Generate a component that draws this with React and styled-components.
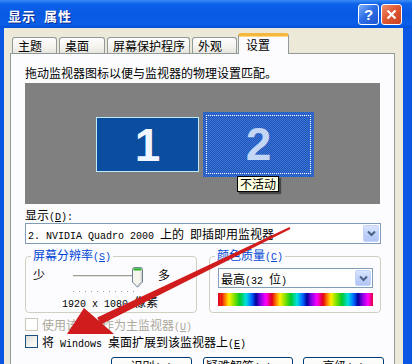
import React from "react";
import styled, { createGlobalStyle } from "styled-components";

const GlobalStyle = createGlobalStyle`
  * { box-sizing: border-box; }
  html, body { margin: 0; padding: 0; background: #0b57e4; }
  body {
    font-family: "Noto Sans CJK SC", "Noto Sans", sans-serif;
    font-size: 12px;
    color: #000;
  }
  #root { width: 412px; height: 364px; }
`;

const Window = styled.div`
  position: relative;
  width: 412px;
  height: 364px;
  overflow: hidden;
  display: flex;
  flex-direction: column;
  background: #0b57e4;
`;

const TitleBar = styled.div`
  flex: none;
  height: 28px;
  display: flex;
  align-items: center;
  justify-content: space-between;
  padding: 2px 10px 0 8px;
  background: linear-gradient(
    180deg,
    #3c8cf6 0%,
    #0d62ea 14%,
    #0858e2 50%,
    #0a5ee8 86%,
    #0550d8 100%
  );
`;

const Title = styled.div`
  color: #fff;
  font-weight: bold;
  font-size: 13px;
  letter-spacing: 1px;
  word-spacing: 4px;
  text-shadow: 1px 1px 0 #0c2a8a;
`;

const TitleButtons = styled.div`
  display: flex;
  gap: 2px;
  margin-top: -1px;
`;

const CapBtn = styled.div`
  width: 21px;
  height: 21px;
  border: 1px solid #fff;
  border-radius: 3px;
  display: flex;
  align-items: center;
  justify-content: center;
  color: #fff;
  font: bold 15px "Liberation Sans", Arial, sans-serif;
  background: ${(p) =>
    p.$close
      ? "linear-gradient(135deg, #f0906c 0%, #e05a36 45%, #c8401e 100%)"
      : "linear-gradient(135deg, #7fb1fa 0%, #2e6ee6 45%, #1d56d0 100%)"};
`;

const Body = styled.div`
  flex: 1;
  display: flex;
  flex-direction: column;
  margin: 0 9px 0 4px;
  padding: 5px 8px 0 6px;
  background: #ece9d8;
`;

const Tabs = styled.div`
  flex: none;
  height: 20px;
  display: flex;
  align-items: flex-end;
  padding-left: 2px;
`;

const Tab = styled.div`
  position: relative;
  z-index: ${(p) => (p.$active ? 2 : 1)};
  width: ${(p) => p.$w}px;
  height: ${(p) => (p.$active ? 21 : 16)}px;
  margin-left: ${(p) => p.$ml}px;
  margin-bottom: ${(p) => (p.$active ? -1 : 0)}px;
  padding-left: ${(p) => (p.$active ? 7 : 5)}px;
  line-height: ${(p) => (p.$active ? 18 : 15)}px;
  border: 1px solid #919b9c;
  border-bottom: none;
  border-radius: 3px 3px 0 0;
  white-space: nowrap;
  background: ${(p) =>
    p.$active ? "#fcfcfe" : "linear-gradient(180deg, #fefefe 0%, #f4f3ee 60%, #e6e4dc 100%)"};
  border-top: ${(p) => (p.$active ? "3px solid #f5b73c" : "1px solid #919b9c")};
  ${(p) => p.$active && "box-shadow: inset 0 1px 0 #ffd88a;"}
`;

const Panel = styled.div`
  flex: 1;
  display: flex;
  flex-direction: column;
  padding: 0 13px 0 14px;
  border: 1px solid #919b9c;
  border-bottom: none;
  background: #fcfcfe;
`;

const Line = styled.div`
  height: 14px;
  line-height: 14px;
  white-space: pre;
  margin-top: ${(p) => p.$mt || 0}px;
  padding-left: ${(p) => p.$pl || 0}px;
  color: ${(p) => (p.$disabled ? "#aca899" : "#000")};
`;

const Lat = styled.span`
  font-family: "Liberation Mono", "DejaVu Sans Mono", monospace;
  font-size: 10px;
  white-space: pre;
`;

const U = styled.span`
  text-decoration: underline;
  font-family: "Liberation Mono", "DejaVu Sans Mono", monospace;
  font-size: 10px;
`;

const Arrange = styled.div`
  position: relative;
  width: 355px;
  height: 121px;
  margin-top: 3px;
  background: #808080;
`;

const Monitor = styled.div`
  position: absolute;
  display: flex;
  align-items: center;
  justify-content: center;
  font: bold 46px "Liberation Sans", Arial, sans-serif;
`;

const MonitorOne = styled(Monitor)`
  left: 71px;
  top: 34px;
  width: 103px;
  height: 55px;
  background: #0b4d9f;
  border: 1px solid #bfeaf8;
  color: #f0f6ff;
`;

const MonitorTwo = styled(Monitor)`
  left: 178px;
  top: 29px;
  width: 111px;
  height: 65px;
  padding: 3px;
  background-color: #2a60c4;
  background-image: repeating-conic-gradient(#3b74d6 0 25%, #1f55b8 0 50%);
  background-size: 2px 2px;
  color: #c3d6f4;
`;

const Focus = styled.div`
  width: 100%;
  height: 100%;
  border: 1px dotted #ffffff;
  display: flex;
  align-items: center;
  justify-content: center;
  padding-bottom: 2px;
`;

const Tip = styled.div`
  position: absolute;
  left: 212px;
  top: 93px;
  width: 42px;
  height: 16px;
  line-height: 14px;
  padding-left: 2px;
  background: #ffffe1;
  border: 1px solid #000;
  box-shadow: 2px 2px 1px rgba(0, 0, 0, 0.45);
`;

const Combo = styled.div`
  display: flex;
  height: ${(p) => p.$h}px;
  width: ${(p) => (p.$w ? `${p.$w}px` : "auto")};
  margin-top: ${(p) => p.$mt || 0}px;
  border: 1px solid #7f9db9;
  background: #fff;
`;

const ComboText = styled.div`
  flex: 1;
  display: flex;
  align-items: center;
  padding-left: 2px;
  white-space: pre;
`;

const DropBtn = styled.div`
  width: 16px;
  margin: 1px;
  border: 1px solid #c3d3fd;
  border-radius: 2px;
  display: flex;
  align-items: center;
  justify-content: center;
  background: linear-gradient(180deg, #dbe6fd 0%, #c0d2fa 50%, #b1c6f7 100%);
`;

const Groups = styled.div`
  display: flex;
  gap: 12px;
  margin-top: 5px;
`;

const Group = styled.fieldset`
  width: 172px;
  height: 64px;
  margin: 0;
  padding: 0;
  border: 1px solid #d0d0bf;
  border-radius: 4px;
  min-width: 0;
`;

const Legend = styled.legend`
  margin-left: 5px;
  padding: 0 2px;
  line-height: 12px;
  color: #0046d5;
  white-space: nowrap;
`;

const SliderRow = styled.div`
  display: flex;
  align-items: flex-start;
  margin-top: 2px;
  padding-left: 7px;
`;

const Slider = styled.div`
  position: relative;
  width: 70px;
  height: 28px;
  margin: 0 15px 0 28px;
`;

const Track = styled.div`
  position: absolute;
  left: 0;
  top: 9px;
  width: 65px;
  height: 3px;
  border-top: 1px solid #9d9c99;
  border-bottom: 1px solid #ffffff;
  background: #e2e1da;
`;

const Ticks = styled.div`
  position: absolute;
  left: 0;
  top: 25px;
  width: 65px;
  height: 1px;
  background: repeating-linear-gradient(90deg, #a1a192 0 1px, transparent 1px 6px);
`;

const Thumb = styled.svg`
  position: absolute;
  left: 59px;
  top: 1px;
`;

const ColourBar = styled.div`
  width: 155px;
  height: 13px;
  margin-top: 5px;
  background: repeating-linear-gradient(
    90deg,
    #e00010 0px,
    #ff7a00 4px,
    #fff000 8px,
    #70e000 14px,
    #00c830 19px,
    #00e0e0 25px,
    #0060ff 31px,
    #00009a 35px,
    #7a00e0 39px,
    #ff00ff 45px,
    #e00010 51px
  );
  background-position: 3px 0;
`;

const GroupInner = styled.div`
  padding-left: 8px;
`;

const CheckRow = styled.div`
  display: flex;
  align-items: center;
  gap: 4px;
  height: 13px;
  margin-top: ${(p) => p.$mt}px;
  color: ${(p) => (p.$disabled ? "#aca899" : "#000")};
  white-space: pre;
`;

const Box = styled.div`
  flex: none;
  width: 13px;
  height: 13px;
  border: 1px solid ${(p) => (p.$disabled ? "#cac8bb" : "#1c5180")};
  background: ${(p) =>
    p.$disabled ? "#fff" : "linear-gradient(135deg, #dcdcd7 0%, #f4f4f0 60%, #ffffff 100%)"};
`;

const Buttons = styled.div`
  display: flex;
  justify-content: flex-end;
  gap: 10px;
  margin: 9px -3px 0 0;
`;

const Button = styled.div`
  width: ${(p) => p.$w}px;
  height: 23px;
  margin-left: ${(p) => p.$ml || 0}px;
  padding-top: 1px;
  text-align: center;
  line-height: 14px;
  border: 1px solid #003c74;
  border-radius: 3px;
  background: linear-gradient(180deg, #ffffff 0%, #f4f3ee 70%, #e6e4dc 100%);
  white-space: nowrap;
`;

const Overlay = styled.svg`
  position: absolute;
  left: 0;
  top: 0;
  pointer-events: none;
`;

const Chevron = () => (
  <svg width="9" height="7" viewBox="0 0 9 7">
    <polyline points="1,1.5 4.5,5 8,1.5" fill="none" stroke="#4d6185" strokeWidth="2" />
  </svg>
);

const tabs = [
  { label: "主题", w: 45, ml: 0 },
  { label: "桌面", w: 46, ml: 2 },
  { label: "屏幕保护程序", w: 83, ml: 2 },
  { label: "外观", w: 45, ml: 2 },
  { label: "设置", w: 51, ml: 1, active: true },
];

export default function App() {
  return (
    <Window>
      <GlobalStyle />
      <TitleBar>
        <Title>显示 属性</Title>
        <TitleButtons>
          <CapBtn>?</CapBtn>
          <CapBtn $close>
            <svg width="11" height="11" viewBox="0 0 11 11">
              <path d="M1.5 1.5 L9.5 9.5 M9.5 1.5 L1.5 9.5" stroke="#fff" strokeWidth="2.2" />
            </svg>
          </CapBtn>
        </TitleButtons>
      </TitleBar>

      <Body>
        <Tabs>
          {tabs.map((t) => (
            <Tab key={t.label} $w={t.w} $ml={t.ml} $active={t.active}>
              {t.label}
            </Tab>
          ))}
        </Tabs>

        <Panel>
          <Line $mt={12}>拖动监视器图标以便与监视器的物理设置匹配。</Line>

          <Arrange>
            <MonitorOne>1</MonitorOne>
            <MonitorTwo>
              <Focus>2</Focus>
            </MonitorTwo>
            <Tip>不活动</Tip>
          </Arrange>

          <Line $mt={4}>
            显示<Lat>(</Lat><U>D</U><Lat>):</Lat>
          </Line>
          <Combo $h={21} $mt={1}>
            <ComboText>
              <span>
                <Lat>{"2. NVIDIA Quadro 2000 "}</Lat>上的<Lat>{" "}</Lat>即插即用监视器
              </span>
            </ComboText>
            <DropBtn>
              <Chevron />
            </DropBtn>
          </Combo>

          <Groups>
            <Group>
              <Legend>
                屏幕分辨率<Lat>(</Lat><U>S</U><Lat>)</Lat>
              </Legend>
              <SliderRow>
                <span>少</span>
                <Slider>
                  <Track />
                  <Ticks />
                  <Thumb width="11" height="21" viewBox="0 0 11 21">
                    <path
                      d="M0.5 2.5 Q0.5 0.5 2.5 0.5 H8.5 Q10.5 0.5 10.5 2.5 V15 L5.5 20.2 L0.5 15 Z"
                      fill="#f6f5ee"
                      stroke="#6b7f98"
                    />
                    <rect x="1.5" y="1.3" width="8" height="2.2" fill="#27b227" />
                    <path d="M9.2 3.5 V14.6 L5.5 18.6" fill="none" stroke="#c9c8bd" />
                  </Thumb>
                </Slider>
                <span>多</span>
              </SliderRow>
              <Line $mt={1} $pl={36}>
                <Lat>{"1920 x 1080 "}</Lat>像素
              </Line>
            </Group>

            <Group>
              <Legend>
                颜色质量<Lat>(</Lat><U>C</U><Lat>)</Lat>
              </Legend>
              <GroupInner>
                <Combo $h={20} $w={155} $mt={4}>
                  <ComboText>
                    <span>
                      最高<Lat>{"(32 "}</Lat>位<Lat>)</Lat>
                    </span>
                  </ComboText>
                  <DropBtn>
                    <Chevron />
                  </DropBtn>
                </Combo>
                <ColourBar />
              </GroupInner>
            </Group>
          </Groups>

          <CheckRow $mt={5} $disabled>
            <Box $disabled />
            <span>
              使用该设备作为主监视器<Lat>(</Lat><U>U</U><Lat>)</Lat>
            </span>
          </CheckRow>
          <CheckRow $mt={4}>
            <Box />
            <span>
              将<Lat>{" Windows "}</Lat>桌面扩展到该监视器上<Lat>(</Lat><U>E</U><Lat>)</Lat>
            </span>
          </CheckRow>

          <Buttons>
            <Button $w={81}>
              识别<Lat>(</Lat><U>I</U><Lat>)</Lat>
            </Button>
            <Button $w={90} $ml={1}>
              疑难解答<Lat>(</Lat><U>B</U><Lat>)...</Lat>
            </Button>
            <Button $w={81}>
              高级<Lat>(</Lat><U>V</U><Lat>)</Lat>
            </Button>
          </Buttons>
        </Panel>
      </Body>

      <Overlay width="412" height="364" viewBox="0 0 412 364">
        <polygon points="289.6,227.1 290.4,228.9 100.8,324.6 97.2,317.4" fill="#d01c1c" />
        <polygon points="67,334 84,308 114,334" fill="#d01c1c" />
      </Overlay>
    </Window>
  );
}
